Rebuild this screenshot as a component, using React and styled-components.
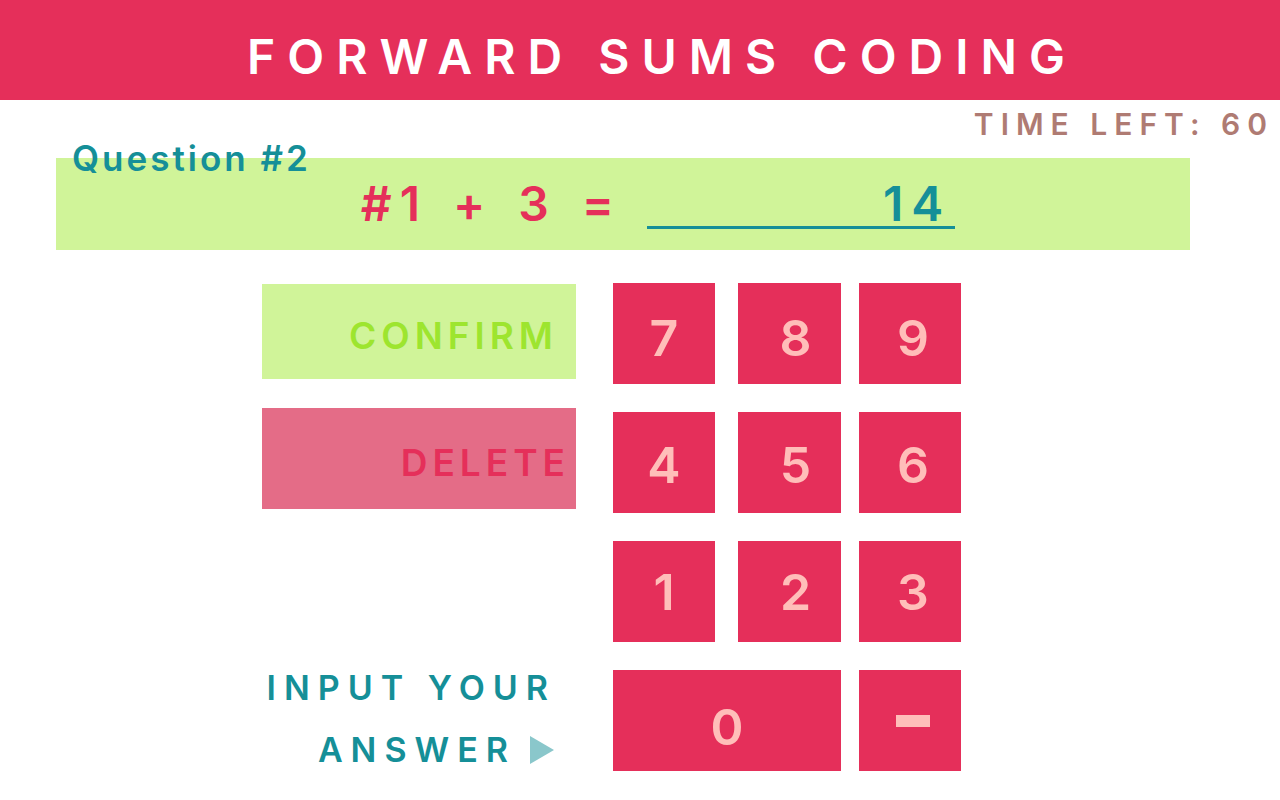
import React, { useState } from "react";
import styled, { createGlobalStyle } from "styled-components";

const color = {
  pink: "#e52f5a",
  rose: "#e46c87",
  blush: "#ffbeb9",
  lime: "#d0f499",
  leaf: "#9de52f",
  teal: "#158f98",
  mist: "#8ac7cb",
  clay: "#af7b73",
};

const GlobalStyle = createGlobalStyle`
  *, *::before, *::after { box-sizing: border-box; }
  body {
    margin: 0;
    background: #fff;
    font-family: Inter, "Liberation Sans", sans-serif;
    font-weight: 600;
  }
  button, input { font: inherit; border: 0; border-radius: 0; padding: 0; margin: 0; }
  button { cursor: pointer; }
`;

const Header = styled.header`
  display: flex;
  align-items: center;
  justify-content: center;
  height: 100px;
  padding: 14px 0 0 44px;
  background: ${color.pink};
`;

const Title = styled.h1`
  margin: 0;
  color: #fff;
  font-size: 48px;
  font-weight: 600;
  line-height: 60px;
  letter-spacing: 12px;
  white-space: nowrap;
`;

const Timer = styled.p`
  margin: 0;
  padding: 4px 6px 0 0;
  color: ${color.clay};
  font-size: 30px;
  line-height: 40px;
  letter-spacing: 7px;
  text-align: right;
`;

const Question = styled.section`
  margin: -6px 90px 0 56px;
`;

const QuestionLabel = styled.h2`
  position: relative;
  margin: 0 0 -20px;
  padding-left: 16px;
  color: ${color.teal};
  font-size: 35px;
  font-weight: 600;
  line-height: 40px;
  letter-spacing: 3px;
`;

const Equation = styled.div`
  display: flex;
  align-items: flex-start;
  justify-content: center;
  gap: 25px;
  height: 92px;
  padding: 16px 0 0 70px;
  background: ${color.lime};
  color: ${color.pink};
  font-size: 48px;
  line-height: 60px;
  letter-spacing: 8px;
`;

const AnswerField = styled.input`
  width: 308px;
  height: 55px;
  border-bottom: 3px solid ${color.teal};
  background: transparent;
  color: ${color.teal};
  letter-spacing: 8px;
  text-align: right;
  padding: 8px 4px 0 0;
  outline: none;
`;

const Board = styled.main`
  display: flex;
  justify-content: center;
  gap: 37px;
  padding: 33px 57px 28px 0;
`;

const SidePanel = styled.div`
  display: flex;
  flex-direction: column;
  gap: 29px;
  width: 314px;
  padding-top: 1px;
`;

const ActionButton = styled.button`
  height: ${(p) => p.$height}px;
  padding: 8px ${(p) => p.$inset}px 0 0;
  background: ${(p) => p.$fill};
  color: ${(p) => p.$ink};
  font-size: 37px;
  line-height: 48px;
  letter-spacing: 5px;
  text-align: right;
`;

const Prompt = styled.p`
  display: flex;
  flex-direction: column;
  align-items: flex-end;
  margin: 119px 0 0;
  padding-right: 20px;
  color: ${color.teal};
  font-size: 34px;
  line-height: 62px;
  letter-spacing: 8px;
  white-space: nowrap;
`;

const PromptLine = styled.span`
  display: flex;
  align-items: center;
  gap: 14px;
`;

const Arrow = styled.svg`
  width: 26px;
  height: 28px;
`;

const Keypad = styled.div`
  display: grid;
  grid-template-columns: 102px 23px 103px 18px 102px;
  grid-auto-rows: 101px;
  row-gap: 28px;
`;

const columnInset = { 3: 12, 5: 6 };

const Key = styled.button`
  display: flex;
  align-items: center;
  justify-content: center;
  grid-column: ${(p) => p.$column};
  padding-top: ${(p) => p.$drop}px;
  padding-left: ${(p) => columnInset[p.$column] || 0}px;
  background: ${color.pink};
  color: ${color.blush};
  font-size: 50px;
  line-height: 60px;
`;

const MinusBar = styled.span`
  width: 34px;
  height: 12px;
  background: ${color.blush};
`;

const columns = ["1", "3", "5"];
const digitRows = [
  { drop: 8, digits: ["7", "8", "9"] },
  { drop: 4, digits: ["4", "5", "6"] },
  { drop: 0, digits: ["1", "2", "3"] },
];

export default function App() {
  const [answer, setAnswer] = useState("14");
  const press = (k) => setAnswer((a) => a + k);

  return (
    <>
      <GlobalStyle />
      <Header>
        <Title>FORWARD SUMS CODING</Title>
      </Header>
      <Timer>TIME LEFT: 60</Timer>
      <Question>
        <QuestionLabel>Question #2</QuestionLabel>
        <Equation>
          <span>#1</span>
          <span>+</span>
          <span>3</span>
          <span>=</span>
          <AnswerField
            type="text"
            aria-label="Your answer"
            value={answer}
            onChange={(e) => setAnswer(e.target.value)}
          />
        </Equation>
      </Question>
      <Board>
        <SidePanel>
          <ActionButton type="button" $height={95} $inset={18} $fill={color.lime} $ink={color.leaf}>
            CONFIRM
          </ActionButton>
          <ActionButton
            type="button"
            $height={101}
            $inset={6}
            $fill={color.rose}
            $ink={color.pink}
            onClick={() => setAnswer((a) => a.slice(0, -1))}
          >
            DELETE
          </ActionButton>
          <Prompt>
            <PromptLine>INPUT YOUR</PromptLine>
            <PromptLine>
              ANSWER
              <Arrow viewBox="0 0 26 28" aria-hidden="true">
                <path d="M0 0 L24 14 L0 28 Z" fill={color.mist} />
              </Arrow>
            </PromptLine>
          </Prompt>
        </SidePanel>
        <Keypad>
          {digitRows.map(({ drop, digits }) =>
            digits.map((digit, c) => (
              <Key
                key={digit}
                type="button"
                $column={columns[c]}
                $drop={drop}
                onClick={() => press(digit)}
              >
                {digit}
              </Key>
            ))
          )}
          <Key type="button" $column="1 / 4" $drop={12} onClick={() => press("0")}>
            0
          </Key>
          <Key type="button" $column="5" $drop={0} aria-label="Minus" onClick={() => press("-")}>
            <MinusBar />
          </Key>
        </Keypad>
      </Board>
    </>
  );
}
